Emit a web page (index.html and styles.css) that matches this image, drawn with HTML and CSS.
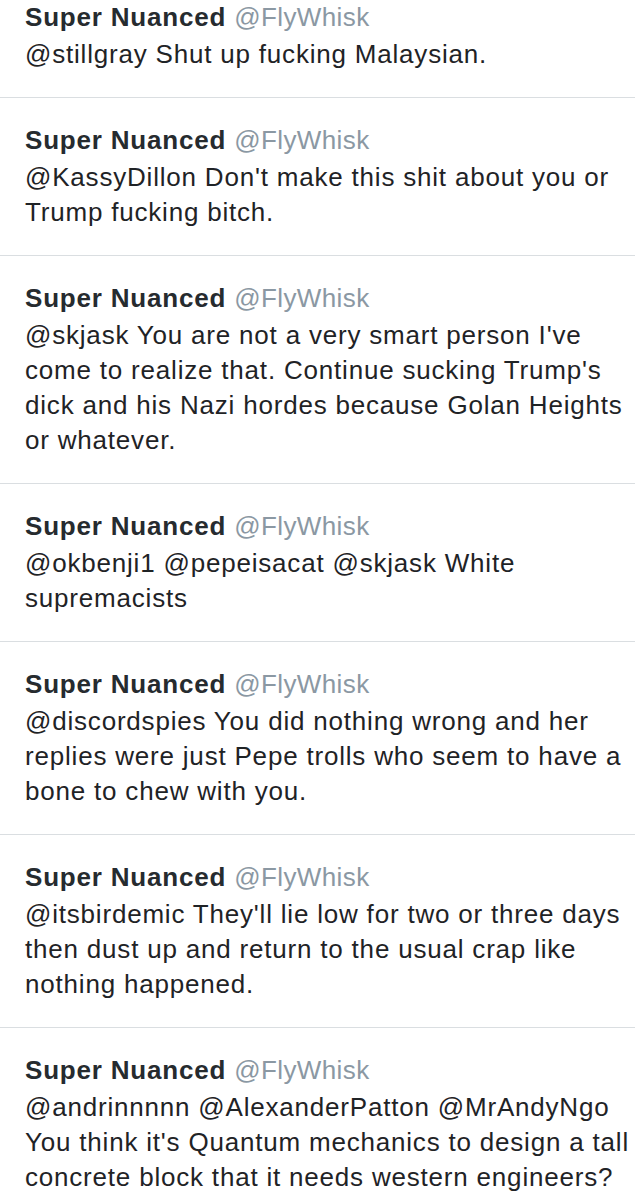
FILE: index.html
```html
<!DOCTYPE html>
<html lang="en">
<head>
<meta charset="utf-8">
<title>Super Nuanced tweets</title>
<link rel="stylesheet" href="styles.css">
</head>
<body>
<main class="timeline">
  <article class="tweet first">
    <div class="head"><span class="name">Super Nuanced</span> <span class="handle">@FlyWhisk</span></div>
    <p class="text">@stillgray Shut up fucking Malaysian.</p>
  </article>
  <article class="tweet">
    <div class="head"><span class="name">Super Nuanced</span> <span class="handle">@FlyWhisk</span></div>
    <p class="text">@KassyDillon Don't make this shit about you or<br>Trump fucking bitch.</p>
  </article>
  <article class="tweet">
    <div class="head"><span class="name">Super Nuanced</span> <span class="handle">@FlyWhisk</span></div>
    <p class="text">@skjask You are not a very smart person I've<br>come to realize that. Continue sucking Trump's<br>dick and his Nazi hordes because Golan Heights<br>or whatever.</p>
  </article>
  <article class="tweet">
    <div class="head"><span class="name">Super Nuanced</span> <span class="handle">@FlyWhisk</span></div>
    <p class="text">@okbenji1 @pepeisacat @skjask White<br>supremacists</p>
  </article>
  <article class="tweet">
    <div class="head"><span class="name">Super Nuanced</span> <span class="handle">@FlyWhisk</span></div>
    <p class="text">@discordspies You did nothing wrong and her<br>replies were just Pepe trolls who seem to have a<br>bone to chew with you.</p>
  </article>
  <article class="tweet">
    <div class="head"><span class="name">Super Nuanced</span> <span class="handle">@FlyWhisk</span></div>
    <p class="text">@itsbirdemic They'll lie low for two or three days<br>then dust up and return to the usual crap like<br>nothing happened.</p>
  </article>
  <article class="tweet">
    <div class="head"><span class="name">Super Nuanced</span> <span class="handle">@FlyWhisk</span></div>
    <p class="text">@andrinnnnn @AlexanderPatton @MrAndyNgo<br>You think it's Quantum mechanics to design a tall<br>concrete block that it needs western engineers?</p>
  </article>
</main>
</body>
</html>
```
FILE: styles.css
```css
html, body {
  margin: 0;
  padding: 0;
  background: #ffffff;
}
body {
  font-family: "Helvetica Neue", "Liberation Sans", Arial, sans-serif;
  color: #1c2022;
  overflow: hidden;
}
.timeline {
  display: flex;
  flex-direction: column;
}
.tweet {
  padding: 25px 0 25px 25px;
  border-bottom: 1px solid #dadee1;
  white-space: nowrap;
}
.tweet.first {
  padding-top: 0;
}
.head {
  font-size: 26px;
  line-height: 35px;
  letter-spacing: 0.8px;
  margin-bottom: 2px;
}
.name {
  font-weight: 700;
  color: #262b2f;
}
.handle {
  color: #8b98a3;
  letter-spacing: 0.4px;
}
.text {
  margin: 0;
  font-size: 26px;
  line-height: 35px;
  letter-spacing: 0.8px;
  color: #1f2326;
}
```
